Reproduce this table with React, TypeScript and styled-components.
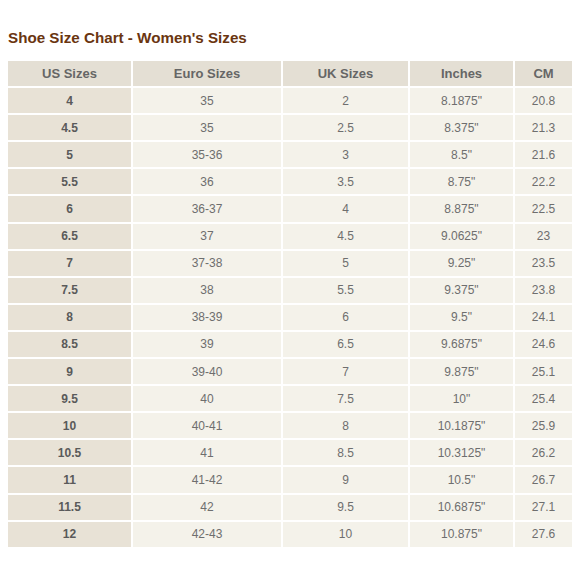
import React from "react";
import styled, { createGlobalStyle } from "styled-components";

const Global = createGlobalStyle`
  html, body { margin: 0; padding: 0; background: #ffffff; }
  body { font-family: "Liberation Sans", Arial, sans-serif; }
`;

const Page = styled.div`
  width: 580px;
  padding: 29px 8px 0 8px;
  box-sizing: border-box;
`;

const Title = styled.h2`
  margin: 0 0 14px 0;
  font-size: 15.2px;
  line-height: 18px;
  font-weight: bold;
  color: #6a3510;
`;

const Grid = styled.div`
  display: grid;
  grid-template-columns: 123px 148px 125px 103px 57px;
  grid-auto-rows: 25.1px;
  gap: 2px;
`;

const Cell = styled.div<{ $kind: "head" | "first" | "body" }>`
  display: flex;
  align-items: center;
  justify-content: center;
  font-size: ${(p) => (p.$kind === "head" ? "13px" : "12px")};
  font-weight: ${(p) => (p.$kind === "body" ? "normal" : "bold")};
  color: ${(p) => (p.$kind === "first" ? "#5a5a5a" : p.$kind === "head" ? "#666666" : "#6e6e6e")};
  background: ${(p) =>
    p.$kind === "head" ? "#e4dfd4" : p.$kind === "first" ? "#e8e2d6" : "#f4f2ea"};
`;

const headers = ["US Sizes", "Euro Sizes", "UK Sizes", "Inches", "CM"];

const rows: string[][] = [
  ["4", "35", "2", "8.1875\"", "20.8"],
  ["4.5", "35", "2.5", "8.375\"", "21.3"],
  ["5", "35-36", "3", "8.5\"", "21.6"],
  ["5.5", "36", "3.5", "8.75\"", "22.2"],
  ["6", "36-37", "4", "8.875\"", "22.5"],
  ["6.5", "37", "4.5", "9.0625\"", "23"],
  ["7", "37-38", "5", "9.25\"", "23.5"],
  ["7.5", "38", "5.5", "9.375\"", "23.8"],
  ["8", "38-39", "6", "9.5\"", "24.1"],
  ["8.5", "39", "6.5", "9.6875\"", "24.6"],
  ["9", "39-40", "7", "9.875\"", "25.1"],
  ["9.5", "40", "7.5", "10\"", "25.4"],
  ["10", "40-41", "8", "10.1875\"", "25.9"],
  ["10.5", "41", "8.5", "10.3125\"", "26.2"],
  ["11", "41-42", "9", "10.5\"", "26.7"],
  ["11.5", "42", "9.5", "10.6875\"", "27.1"],
  ["12", "42-43", "10", "10.875\"", "27.6"],
];

export default function App() {
  return (
    <>
      <Global />
      <Page>
        <Title>Shoe Size Chart - Women's Sizes</Title>
        <Grid>
          {headers.map((h) => (
            <Cell key={h} $kind="head">
              {h}
            </Cell>
          ))}
          {rows.map((r, i) =>
            r.map((v, j) => (
              <Cell key={`${i}-${j}`} $kind={j === 0 ? "first" : "body"}>
                {v}
              </Cell>
            ))
          )}
        </Grid>
      </Page>
    </>
  );
}
